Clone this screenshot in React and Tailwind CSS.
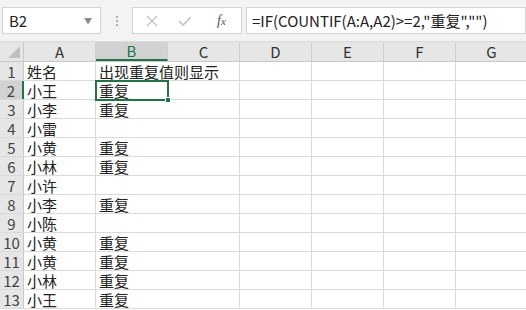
import React from 'react';

const cols = ['A', 'B', 'C', 'D', 'E', 'F', 'G'];
const rows = [
  ['姓名', '出现重复值则显示'],
  ['小王', '重复'],
  ['小李', '重复'],
  ['小雷', ''],
  ['小黄', '重复'],
  ['小林', '重复'],
  ['小许', ''],
  ['小李', '重复'],
  ['小陈', ''],
  ['小黄', '重复'],
  ['小黄', '重复'],
  ['小林', '重复'],
  ['小王', '重复'],
];

const font = { fontFamily: '"Noto Sans CJK SC", "Liberation Sans", sans-serif' };

export default function App() {
  return (
    <div className="w-[526px] h-[310px] overflow-hidden bg-white text-[#222]" style={font}>
      {/* formula bar */}
      <div className="h-[42px] bg-[#f3f3f3] flex items-center pl-[2px] border-b border-[#dadada]">
        <div className="w-[99px] h-[27px] bg-white border border-[#d4d4d4] flex items-center justify-between pl-[6px] pr-[8px]">
          <span className="text-[15px] leading-none">B2</span>
          <span className="text-[8px] text-[#888]">▼</span>
        </div>
        <div className="w-[31px] flex justify-center">
          <div className="flex flex-col gap-[2px]">
            <span className="w-[2px] h-[2px] bg-[#b0b0b0]" />
            <span className="w-[2px] h-[2px] bg-[#b0b0b0]" />
            <span className="w-[2px] h-[2px] bg-[#b0b0b0]" />
          </div>
        </div>
        <div className="w-[110px] h-[27px] bg-white border border-[#d4d4d4] flex items-center">
          <svg width="14" height="14" viewBox="0 0 14 14" className="ml-[12px]">
            <path d="M2 2L12 12M12 2L2 12" stroke="#c4c4c4" strokeWidth="1.4" />
          </svg>
          <svg width="16" height="14" viewBox="0 0 16 14" className="ml-[18px]">
            <path d="M2 7L6 11L14 3" stroke="#c4c4c4" strokeWidth="1.6" fill="none" />
          </svg>
          <span className="ml-[24px] text-[14px] italic text-[#555]" style={{ fontFamily: '"Liberation Serif", serif' }}>
            f<span className="text-[11px]">x</span>
          </span>
        </div>
        <div className="ml-[4px] flex-1 h-[27px] bg-white border border-[#d4d4d4] flex items-center pl-[5px]">
          <span className="text-[15px] leading-none whitespace-nowrap">=IF(COUNTIF(A:A,A2)&gt;=2,"重复","")</span>
        </div>
      </div>

      {/* column headers */}
      <div className="flex h-[20px] bg-[#e6e6e6] border-b border-[#c8c8c8]">
        <div className="w-[24px] shrink-0 border-r border-[#c8c8c8] relative">
          <div className="absolute right-[3px] bottom-[3px] w-0 h-0 border-l-[12px] border-l-transparent border-b-[12px] border-b-[#c0c0c0]" />
        </div>
        {cols.map((c) => (
          <div
            key={c}
            className={
              'w-[72px] shrink-0 flex items-center justify-center text-[15px] leading-none border-r border-[#d0d0d0] ' +
              (c === 'B' ? 'bg-[#d2d2d2] text-[#217346] border-b-2 border-b-[#217346]' : 'text-[#333]')
            }
          >
            {c}
          </div>
        ))}
      </div>

      {/* rows */}
      {rows.map((r, i) => (
        <div key={i} className={'flex h-[19px] border-b border-[#dadada]' + (i === 1 ? ' relative' : '')}>
          <div
            className={
              'w-[24px] shrink-0 flex items-center justify-center text-[15px] leading-none text-[#444] ' +
              (i === 1 ? 'bg-[#d2d2d2] border-r-2 border-[#217346]' : 'bg-[#e6e6e6] border-r border-[#c8c8c8]')
            }
          >
            {i + 1}
          </div>
          {cols.map((c, j) => (
            <div
              key={c}
              className={
                'w-[72px] shrink-0 flex items-center pl-[3px] pt-[1px] text-[15px] leading-none whitespace-nowrap ' +
                (j === 1 ? '' : 'border-r border-[#dadada]')
              }
            >
              {j < 2 ? r[j] : ''}
            </div>
          ))}
          {i === 1 && (
            <>
              <div className="absolute left-[95px] top-[-1px] w-[74px] h-[21px] border-2 border-[#217346] z-10" />
              <div className="absolute left-[165px] top-[16px] w-[6px] h-[6px] bg-[#217346] border border-white z-20" />
            </>
          )}
        </div>
      ))}
    </div>
  );
}
